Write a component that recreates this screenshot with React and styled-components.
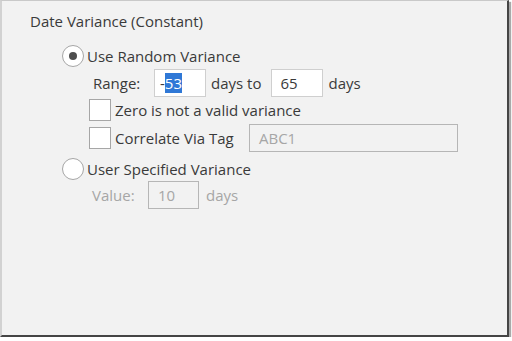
import React from 'react';
import styled, { createGlobalStyle } from 'styled-components';

const GlobalStyle = createGlobalStyle`
  html, body {
    margin: 0;
    padding: 0;
    background: #ffffff;
  }
  body {
    font-family: 'Open Sans', 'Noto Sans', 'Liberation Sans', sans-serif;
  }
`;

const Frame = styled.div`
  box-sizing: border-box;
  width: 509px;
  height: 337px;
  background: #f2f2f2;
  border-top: 1px solid #c9c9c9;
  border-left: 2px solid #d2d2d2;
  border-right: 2px solid #454545;
  border-bottom: 2px solid #454545;
  box-shadow: 2px 2px 1px #a9a9a9;
  padding: 9px 0 0 28px;
  color: #3a3a3a;
  font-size: 15px;
`;

const Title = styled.div`
  height: 22px;
  line-height: 22px;
`;

const Group = styled.div`
  margin-left: 32px;
  display: flex;
  flex-direction: column;
`;

const RadioRow = styled.label`
  display: flex;
  align-items: center;
  gap: 3px;
  height: 23px;
  margin-top: ${p => p.$top || 0}px;
`;

const Radio = styled.span`
  box-sizing: border-box;
  width: 22px;
  height: 22px;
  border-radius: 50%;
  border: 1px solid #a6a6a6;
  background: #ffffff;
  display: flex;
  align-items: center;
  justify-content: center;

  &::after {
    content: '';
    display: ${p => (p.$checked ? 'block' : 'none')};
    width: 8px;
    height: 8px;
    border-radius: 50%;
    background: #4d4d4d;
  }
`;

const Indent = styled.div`
  margin-left: ${p => p.$left}px;
  display: flex;
  flex-direction: column;
`;

const FieldRow = styled.div`
  display: flex;
  align-items: center;
  height: ${p => p.$h || 28}px;
  margin-top: ${p => p.$top || 0}px;
  color: ${p => (p.$disabled ? '#a6a6a6' : '#3a3a3a')};
`;

const Caption = styled.span`
  width: ${p => p.$w}px;
  flex-shrink: 0;
`;

const Unit = styled.span`
  margin-left: ${p => p.$left || 5}px;
`;

const Box = styled.div`
  box-sizing: border-box;
  width: ${p => p.$w}px;
  height: 28px;
  margin-left: ${p => p.$left || 0}px;
  border: 1px solid ${p => (p.$disabled ? '#b6b6b6' : '#cfcfcf')};
  background: ${p => (p.$disabled ? '#f2f2f2' : '#ffffff')};
  color: ${p => (p.$disabled ? '#a6a6a6' : '#3a3a3a')};
  padding-left: ${p => p.$pad || 8}px;
  display: flex;
  align-items: center;
  font-size: 15px;
  font-family: 'Open Sans', 'Noto Sans', sans-serif;
`;

const Selected = styled.span`
  background: #2f78d6;
  color: #ffffff;
`;

const CheckRow = styled.label`
  display: flex;
  align-items: center;
  gap: 4px;
  height: ${p => p.$h || 22}px;
  margin-top: ${p => p.$top || 0}px;
`;

const Check = styled.span`
  box-sizing: border-box;
  width: 22px;
  height: 22px;
  border: 1px solid #a6a6a6;
  background: #ffffff;
  flex-shrink: 0;
`;

const CheckLabel = styled.span`
  width: ${p => p.$w || 'auto'};
  flex-shrink: 0;
`;

export default function App() {
  return (
    <>
      <GlobalStyle />
      <Frame>
        <Title>Date Variance (Constant)</Title>
        <Group>
          <RadioRow $top={12}>
            <Radio $checked />
            <span>Use Random Variance</span>
          </RadioRow>
          <Indent $left={31}>
            <FieldRow $top={2}>
              <Caption $w={61}>Range:</Caption>
              <Box $w={52} $pad={5}>
                -<Selected>53</Selected>
              </Box>
              <Unit>days to</Unit>
              <Box $w={52} $left={10}>65</Box>
              <Unit>days</Unit>
            </FieldRow>
          </Indent>
          <Indent $left={27}>
            <CheckRow $top={2}>
              <Check />
              <span>Zero is not a valid variance</span>
            </CheckRow>
            <CheckRow $h={28} $top={3}>
              <Check />
              <CheckLabel $w="130px">Correlate Via Tag</CheckLabel>
              <Box $w={209} $disabled $pad={9}>ABC1</Box>
            </CheckRow>
          </Indent>
          <RadioRow $top={5}>
            <Radio />
            <span>User Specified Variance</span>
          </RadioRow>
          <Indent $left={30}>
            <FieldRow $disabled $h={28} $top={1}>
              <Caption $w={56}>Value:</Caption>
              <Box $w={51} $disabled $pad={9}>10</Box>
              <Unit $left={7}>days</Unit>
            </FieldRow>
          </Indent>
        </Group>
      </Frame>
    </>
  );
}
